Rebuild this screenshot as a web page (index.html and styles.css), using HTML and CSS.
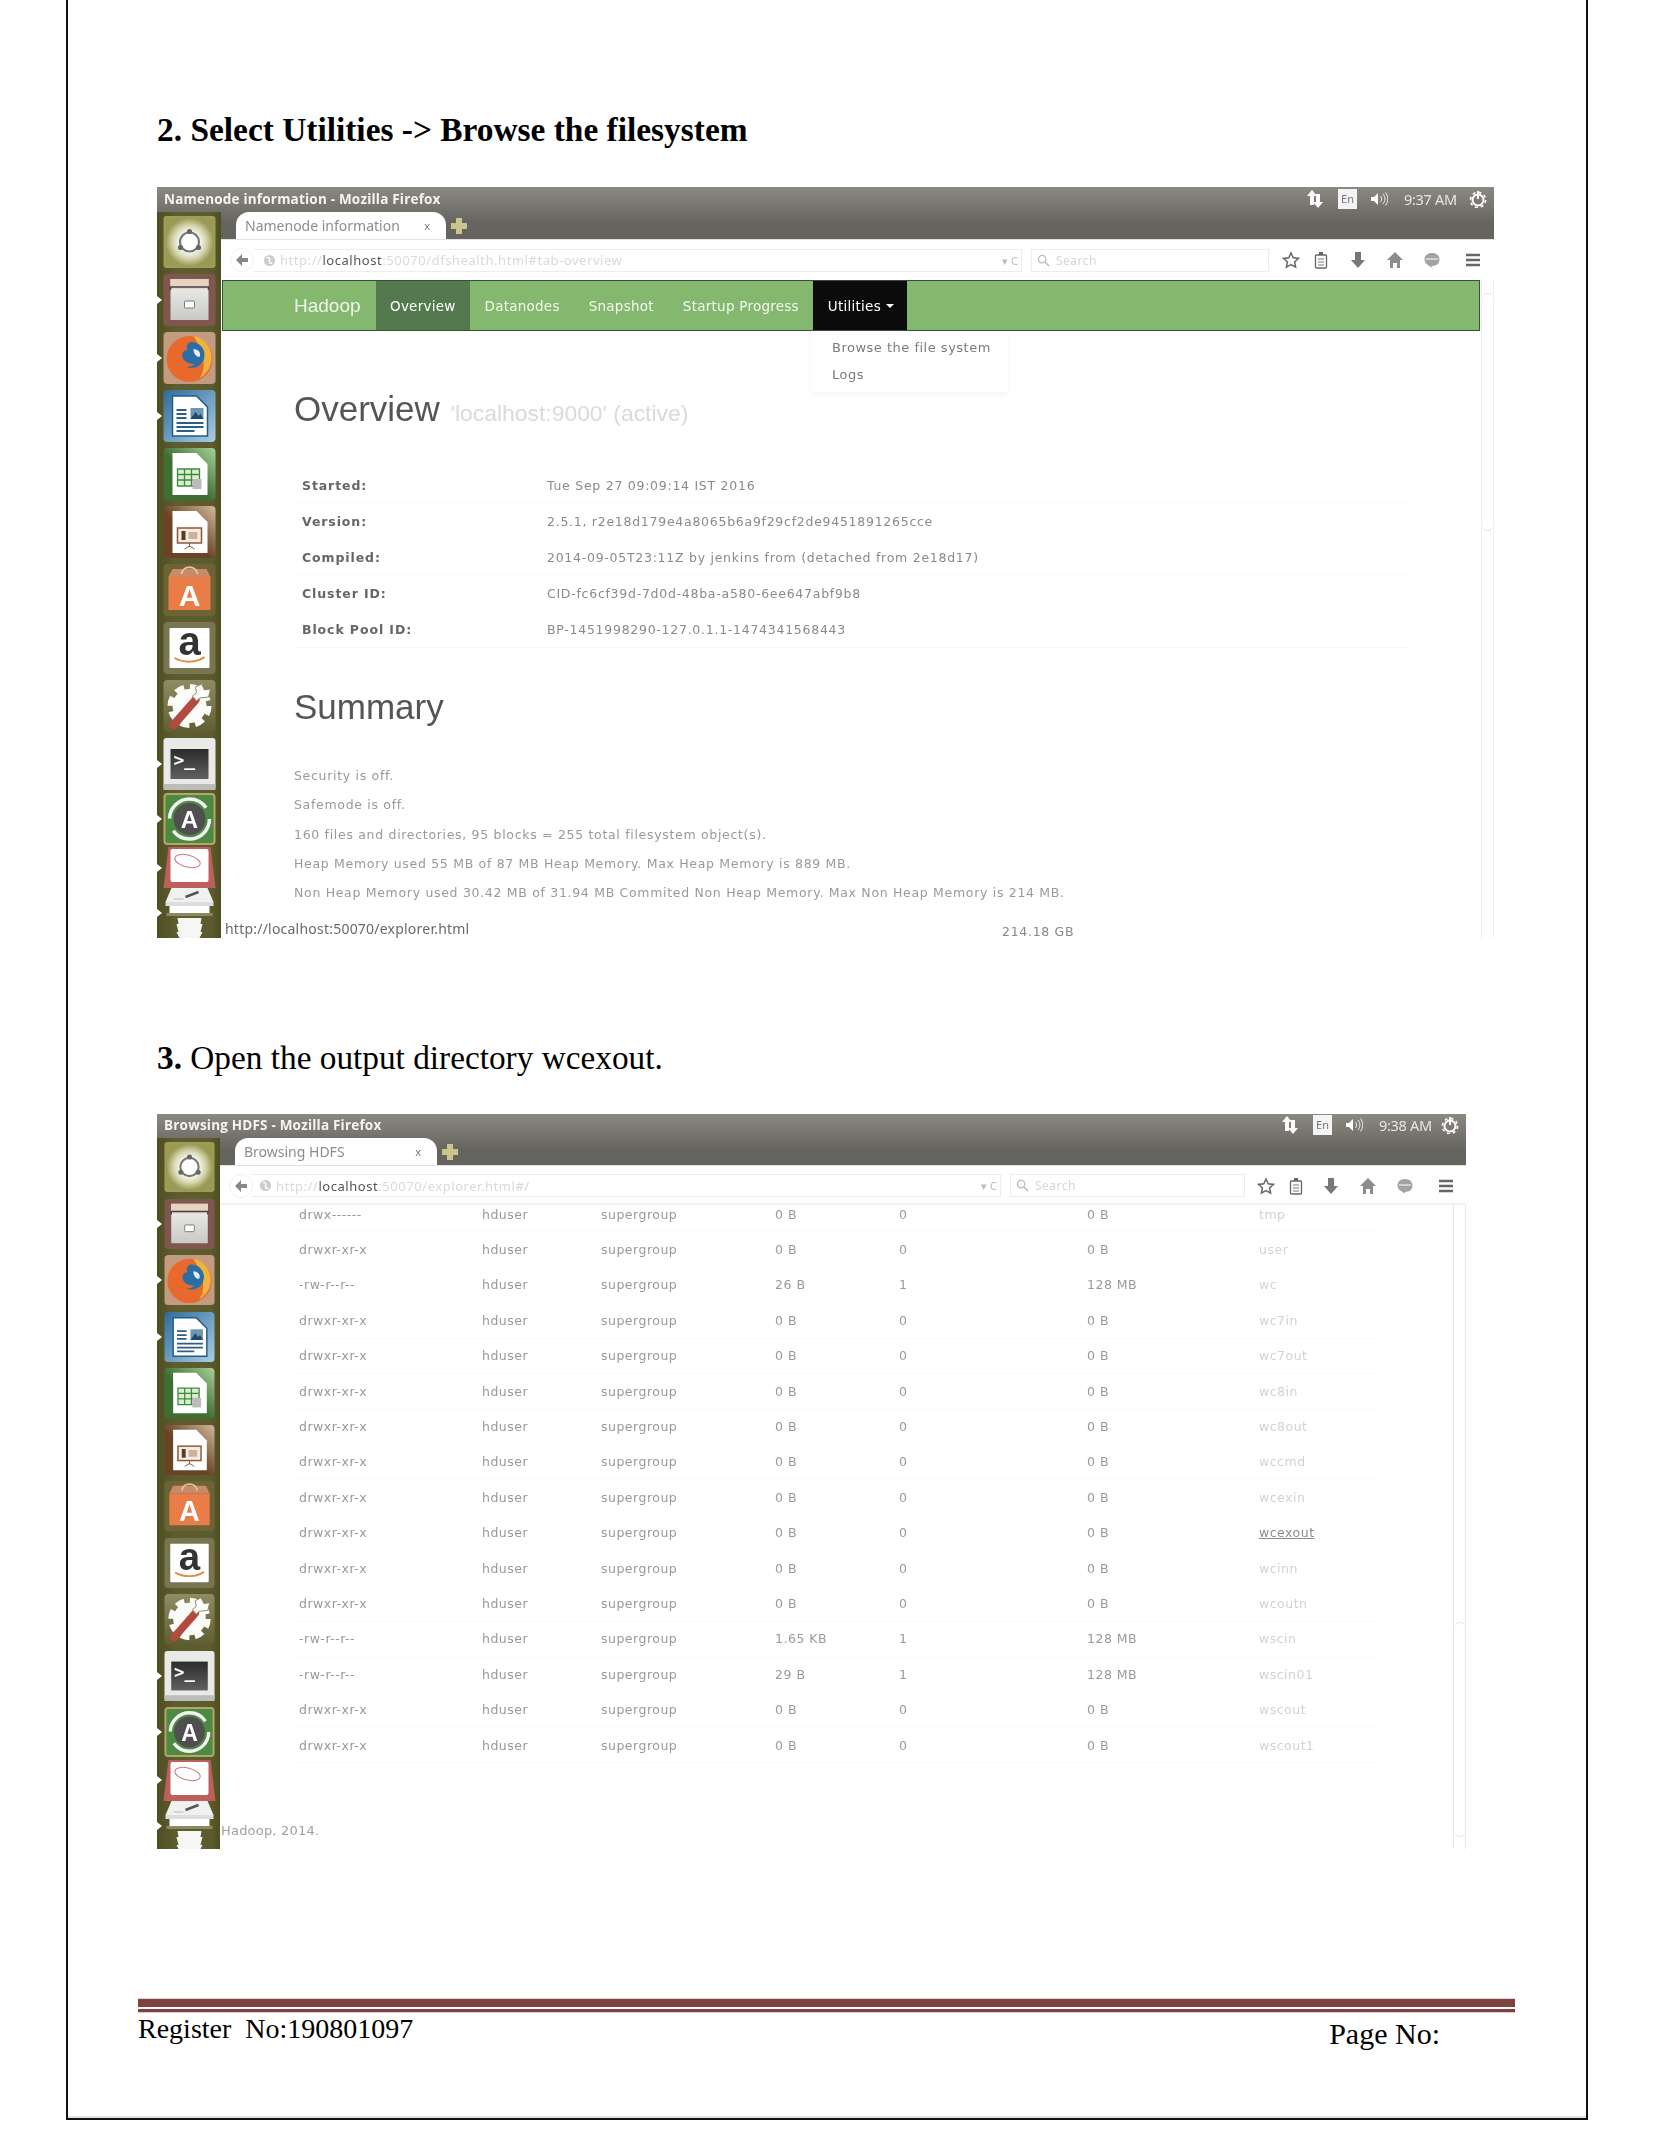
FILE: index.html
```html
<!DOCTYPE html>
<html lang="en">
<head>
<meta charset="utf-8">
<title>Hadoop lab record</title>
<link rel="stylesheet" href="styles.css">
</head>
<body>
<svg class="defs" aria-hidden="true">
  <defs>
    <radialGradient id="gDash"><stop offset="0.35" stop-color="#fff"/><stop offset="0.7" stop-color="#d4d4ac"/><stop offset="1" stop-color="#9a9a55"/></radialGradient>
    <linearGradient id="gDrawer" x1="0" y1="0" x2="0" y2="1"><stop offset="0" stop-color="#f1f1ef"/><stop offset="1" stop-color="#c9c9c6"/></linearGradient>
    <linearGradient id="gWriter" x1="0" y1="0" x2="1" y2="1"><stop offset="0" stop-color="#2f6b99"/><stop offset="1" stop-color="#a9cde4"/></linearGradient>
    <linearGradient id="gCalc" x1="0" y1="1" x2="1" y2="0"><stop offset="0.45" stop-color="#3d6f33"/><stop offset="1" stop-color="#a8d09a"/></linearGradient>
    <linearGradient id="gImp" x1="0" y1="1" x2="1" y2="0"><stop offset="0.45" stop-color="#6a4324"/><stop offset="1" stop-color="#d3b89d"/></linearGradient>
    <linearGradient id="gTerm" x1="0" y1="0" x2="0" y2="1"><stop offset="0" stop-color="#2b2b2b"/><stop offset="1" stop-color="#606060"/></linearGradient>
    <linearGradient id="gTile" x1="0" y1="0" x2="0" y2="1"><stop offset="0" stop-color="#8d8c63"/><stop offset="1" stop-color="#5f5e33"/></linearGradient>
    <symbol id="i-dash" viewBox="0 0 52 52"><rect width="52" height="52" rx="3" fill="#9d9c58"/><rect x="2" y="2" width="48" height="48" fill="url(#gDash)"/><circle cx="26" cy="26" r="9.500" fill="none" stroke="#777" stroke-width="2.200"/><circle cx="26" cy="15.500" r="2.600" fill="#666"/><circle cx="17" cy="31.500" r="2.600" fill="#666"/><circle cx="35" cy="31.500" r="2.600" fill="#666"/></symbol>
    <symbol id="i-files" viewBox="0 0 52 52"><rect width="52" height="52" rx="4" fill="#80574e"/><rect x="7" y="5" width="38" height="41" fill="url(#gDrawer)"/><rect x="7" y="5" width="38" height="10" fill="#e7d3bf"/><path d="M7 16V13H45V16" fill="none" stroke="#444" stroke-width="1.500"/><rect x="21" y="27" width="10" height="7" rx="1" fill="#fff" stroke="#777"/></symbol>
    <symbol id="i-firefox" viewBox="0 0 52 52"><rect width="52" height="52" rx="4" fill="#c49a80"/><circle cx="26" cy="27" r="23" fill="#e8692c"/><path d="M30 4c12 2 19 13 18 24-1 9-6 15-12 18 6-8 7-21-6-42z" fill="#f0b33c"/><circle cx="28" cy="23" r="13" fill="#2b6ea6"/><path d="M14 13c4-4 10-5 13-3-3 1-5 5-3 8-4 0-6 3-5 7 1 4 5 7 12 7-6 6-20 3-22-9-1-4 2-8 5-10z" fill="#e8692c"/><path d="M30 17c5 0 8 4 6 8-3 0-6-3-6-8z" fill="#e6edf2"/></symbol>
    <symbol id="i-writer" viewBox="0 0 52 52"><rect width="52" height="52" rx="4" fill="url(#gWriter)"/><path d="M9 6H33L44 17V46H9z" fill="#fff" stroke="#1f5c8d" stroke-width="1.500"/><path d="M13 20h10M13 24h10M13 28h10M13 33h27M13 37h27M13 41h18" stroke="#2b5f88" stroke-width="1.800"/><rect x="27" y="18" width="13" height="11" fill="#6d95b4"/><path d="M27 29l5-7 3 4 2-2 3 5z" fill="#1e4a6d"/></symbol>
    <symbol id="i-calc" viewBox="0 0 52 52"><rect width="52" height="52" rx="4" fill="url(#gCalc)"/><path d="M9 5H33L44 16V47H9z" fill="#fff"/><path d="M14 21h22v17H14zM14 26.500h22M14 32h22M21 21v17M28 21v17" fill="#dcecd4" stroke="#3e8a38" stroke-width="1.300"/><rect x="29" y="31" width="9" height="10" fill="#bbb"/></symbol>
    <symbol id="i-impress" viewBox="0 0 52 52"><rect width="52" height="52" rx="4" fill="url(#gImp)"/><path d="M9 5H33L44 16V47H9z" fill="#fff"/><rect x="14" y="22" width="24" height="15" fill="#f4ece3" stroke="#8a5a34" stroke-width="1.500"/><rect x="18" y="25" width="4" height="9" fill="#5a3a20"/><rect x="25" y="26" width="9" height="7" fill="#c8b39c"/><path d="M26 37v4M21 43l5-3 5 3" stroke="#8a5a34" fill="none"/></symbol>
    <symbol id="i-soft" viewBox="0 0 52 52"><rect width="52" height="52" rx="4" fill="#6d6436"/><path d="M5 13H47V46H5z" fill="#ea7c47"/><path d="M5 13H47L43 5H9z" fill="#c98a68"/><path d="M18 10c1-9 15-9 16 0" fill="none" stroke="#e8c0a8" stroke-width="2"/><text x="26" y="42" class="sv-a" fill="#fff">A</text></symbol>
    <symbol id="i-amazon" viewBox="0 0 52 52"><rect width="52" height="52" rx="4" fill="#777650"/><rect x="6" y="6" width="40" height="40" rx="1" fill="#fff"/><text x="26" y="33" class="sv-amz" fill="#333">a</text><path d="M11 36c9 5 22 5 30 -1" fill="none" stroke="#e08c3c" stroke-width="2"/></symbol>
    <symbol id="i-tools" viewBox="0 0 52 52"><rect width="52" height="52" rx="4" fill="url(#gTile)"/><circle cx="26" cy="26" r="17" fill="#fbfbf8"/><circle cx="26" cy="26" r="19" fill="none" stroke="#fbfbf8" stroke-width="6" stroke-dasharray="9 5.900"/><path d="M10 45L32 20" stroke="#b34a40" stroke-width="8" stroke-linecap="round"/><path d="M38 4l3 6 6-1-2 8-9 1-3 3-4-5 4-3-1-6z" fill="#fff" stroke="#8d8c63"/></symbol>
    <symbol id="i-term" viewBox="0 0 52 52"><rect width="52" height="52" rx="3" fill="#e9e9e7"/><rect x="0" y="46" width="52" height="6" fill="#bcbcb8"/><rect x="7" y="11" width="38" height="30" fill="url(#gTerm)"/><text x="10" y="28" class="sv-term" fill="#fff">&gt;_</text></symbol>
    <symbol id="i-update" viewBox="0 0 52 52"><rect x="1" y="1" width="50" height="50" rx="3" fill="#4c8a42" stroke="#b6a568" stroke-width="2"/><circle cx="26" cy="26" r="20" fill="none" stroke="#f1f1f1" stroke-width="3.500" stroke-dasharray="50 13"/><circle cx="26" cy="26" r="16" fill="#4f4f4f"/><text x="26" y="35" class="sv-a small" fill="#fff">A</text></symbol>
    <symbol id="i-red" viewBox="0 0 52 41"><path d="M5 0H47L52 41H0z" fill="#bd5f5c"/><rect x="7" y="2" width="38" height="33" rx="2" fill="#fff"/><ellipse cx="24" cy="14" rx="13" ry="6" fill="none" stroke="#c77a78" stroke-width="1" transform="rotate(14 24 14)"/></symbol>
    <symbol id="i-stack" viewBox="0 0 52 50"><path d="M8 0H44L50 14H2z" fill="#f1f1ef"/><path d="M22 9l13-5" stroke="#555" stroke-width="2.500"/><path d="M10 11h10" stroke="#bbb"/><rect x="2" y="14" width="48" height="4" fill="#ddd"/><rect x="6" y="18" width="40" height="7" fill="#fff"/><rect x="3" y="25" width="46" height="3" fill="#8a8a60"/><path d="M14 30H38L37 36H39L37 44H39L36 50H16L13 44H15L13 36H15z" fill="#f6f6f4"/></symbol>

    <symbol id="t-star" viewBox="0 0 18 18"><path d="M9 2l2.200 4.800 5.300.600-3.900 3.600 1 5.200L9 13.700 4.400 16.200l1-5.200L1.500 7.400l5.300-.600z" fill="none" stroke="#666" stroke-width="1.500"/></symbol>
    <symbol id="t-clip" viewBox="0 0 18 18"><rect x="3.500" y="4" width="11" height="13" rx="1" fill="none" stroke="#666" stroke-width="1.300"/><path d="M6 8h6M6 11h6M6 14h6" stroke="#777"/><rect x="7" y="1" width="4" height="3" fill="#666"/></symbol>
    <symbol id="t-down" viewBox="0 0 18 18"><path d="M6 1h6v8h4l-7 8-7-8h4z" fill="#777"/></symbol>
    <symbol id="t-home" viewBox="0 0 18 18"><path d="M9 1l8 8h-3v8h-3v-5H7v5H4V9H1z" fill="#8c8c8c"/></symbol>
    <symbol id="t-chat" viewBox="0 0 18 18"><path d="M9 2c4.500 0 7.500 2.800 7.500 6.500S13.500 15 9 15l-1 1.500-2-2C3 13.500 1.500 11 1.500 8.500 1.500 4.800 4.500 2 9 2z" fill="#a2a2a2"/><path d="M3 8h12" stroke="#fff"/></symbol>
    <symbol id="t-menu" viewBox="0 0 18 18"><path d="M2 4h14M2 9h14M2 14h14" stroke="#666" stroke-width="2.400"/></symbol>
    <symbol id="t-arrows" viewBox="0 0 18 18"><path d="M6 0l5 6H8v9H4V6H1zM12 18l-5-6h3V4h4v8h3z" fill="#fff"/></symbol>
    <symbol id="t-sound" viewBox="0 0 18 18"><path d="M1 7h3l4-4v12l-4-4H1z" fill="#fff"/><path d="M10.500 6c1.500 2 1.500 4 0 6M13 4c2.500 3 2.500 7 0 10M15.500 2.500c3 4 3 9 0 13" fill="none" stroke="#eee"/></symbol>
    <symbol id="t-power" viewBox="0 0 18 18"><circle cx="9" cy="10" r="5.500" fill="none" stroke="#fff" stroke-width="2"/><circle cx="9" cy="10" r="7.600" fill="none" stroke="#fff" stroke-width="1.600" stroke-dasharray="3 3"/><path d="M9 1v8" stroke="#fff" stroke-width="2"/></symbol>
    <symbol id="t-search" viewBox="0 0 14 14"><circle cx="5.500" cy="5.500" r="4" fill="none" stroke="#bbb" stroke-width="1.300"/><path d="M8.500 8.500l4.500 4.500" stroke="#bbb" stroke-width="1.500"/></symbol>
    <symbol id="t-globe" viewBox="0 0 14 14"><circle cx="7" cy="7" r="6" fill="#ccc"/><path d="M4 4c3-1 4 1 3 3s1 3 3 3" fill="none" stroke="#fff" stroke-width="1.500"/></symbol>
    <symbol id="t-back" viewBox="0 0 14 14"><path d="M7 1L1 7l6 6V9h6V5H7z" fill="#888"/></symbol>
  </defs>
</svg>

<main class="sheet">
  <h2 class="step">2. Select Utilities -&gt; Browse the filesystem</h2>

  <section class="shot shot-a">
    <header class="titlebar">
      <span class="wintitle">Namenode information - Mozilla Firefox</span>
      <div class="tray">
        <svg class="tray-ic"><use href="#t-arrows"/></svg>
        <span class="lang">En</span>
        <svg class="tray-ic"><use href="#t-sound"/></svg>
        <span class="clock">9:37 AM</span>
        <svg class="tray-ic"><use href="#t-power"/></svg>
      </div>
    </header>
    <div class="shot-body">
      <nav class="dock">
        <div class="slot"><svg class="dock-ic"><use href="#i-dash"/></svg></div>
        <div class="slot run"><svg class="dock-ic"><use href="#i-files"/></svg></div>
        <div class="slot run active"><svg class="dock-ic"><use href="#i-firefox"/></svg></div>
        <div class="slot run"><svg class="dock-ic"><use href="#i-writer"/></svg></div>
        <div class="slot"><svg class="dock-ic"><use href="#i-calc"/></svg></div>
        <div class="slot"><svg class="dock-ic"><use href="#i-impress"/></svg></div>
        <div class="slot"><svg class="dock-ic"><use href="#i-soft"/></svg></div>
        <div class="slot"><svg class="dock-ic"><use href="#i-amazon"/></svg></div>
        <div class="slot"><svg class="dock-ic"><use href="#i-tools"/></svg></div>
        <div class="slot run"><svg class="dock-ic"><use href="#i-term"/></svg></div>
        <div class="slot run upd"><svg class="dock-ic"><use href="#i-update"/></svg></div>
        <div class="slot run squat"><svg class="dock-ic"><use href="#i-red"/></svg></div>
        <div class="slot run stack"><svg class="dock-ic"><use href="#i-stack"/></svg></div>
      </nav>
      <div class="browser">
        <div class="tabstrip">
          <div class="tab"><span>Namenode information</span><b class="tab-x">x</b></div>
          <span class="newtab"></span>
        </div>
        <div class="toolbar">
          <span class="backbtn"><svg class="back-ic"><use href="#t-back"/></svg></span>
          <div class="urlbar">
            <svg class="url-ic"><use href="#t-globe"/></svg>
            <span class="url"><span>http://</span><em>localhost</em><span>:50070/dfshealth.html#tab-overview</span></span>
            <span class="url-end">▾ C</span>
          </div>
          <div class="searchbar"><svg class="url-ic"><use href="#t-search"/></svg><span>Search</span></div>
          <div class="tools">
            <svg class="tool"><use href="#t-star"/></svg>
            <svg class="tool"><use href="#t-clip"/></svg>
            <svg class="tool"><use href="#t-down"/></svg>
            <svg class="tool"><use href="#t-home"/></svg>
            <svg class="tool"><use href="#t-chat"/></svg>
            <svg class="tool"><use href="#t-menu"/></svg>
          </div>
        </div>
        <div class="view">
          <div class="doc">
            <div class="navbar">
              <span class="brand">Hadoop</span>
              <span class="nav-item current">Overview</span>
              <span class="nav-item">Datanodes</span>
              <span class="nav-item">Snapshot</span>
              <span class="nav-item">Startup Progress</span>
              <span class="nav-item open">Utilities <i class="caret"></i></span>
            </div>
            <div class="dropdown">
              <span>Browse the file system</span>
              <span>Logs</span>
            </div>
            <div class="content">
              <h1 class="heading">Overview <small>'localhost:9000' (active)</small></h1>
              <dl class="facts">
                <div class="fact"><dt>Started:</dt><dd>Tue Sep 27 09:09:14 IST 2016</dd></div>
                <div class="fact"><dt>Version:</dt><dd>2.5.1, r2e18d179e4a8065b6a9f29cf2de9451891265cce</dd></div>
                <div class="fact"><dt>Compiled:</dt><dd>2014-09-05T23:11Z by jenkins from (detached from 2e18d17)</dd></div>
                <div class="fact"><dt>Cluster ID:</dt><dd>CID-fc6cf39d-7d0d-48ba-a580-6ee647abf9b8</dd></div>
                <div class="fact"><dt>Block Pool ID:</dt><dd>BP-1451998290-127.0.1.1-1474341568443</dd></div>
              </dl>
              <h1 class="heading second">Summary</h1>
              <div class="summary">
                <p>Security is off.</p>
                <p>Safemode is off.</p>
                <p>160 files and directories, 95 blocks = 255 total filesystem object(s).</p>
                <p>Heap Memory used 55 MB of 87 MB Heap Memory. Max Heap Memory is 889 MB.</p>
                <p>Non Heap Memory used 30.42 MB of 31.94 MB Commited Non Heap Memory. Max Non Heap Memory is 214 MB.</p>
              </div>
            </div>
            <span class="status">http://localhost:50070/explorer.html</span>
            <span class="peek">214.18 GB</span>
          </div>
          <div class="scroll"><span class="thumb"></span></div>
        </div>
      </div>
    </div>
  </section>

  <h2 class="step plain"><b>3.</b> Open the output directory wcexout.</h2>

  <section class="shot shot-b">
    <header class="titlebar">
      <span class="wintitle">Browsing HDFS - Mozilla Firefox</span>
      <div class="tray">
        <svg class="tray-ic"><use href="#t-arrows"/></svg>
        <span class="lang">En</span>
        <svg class="tray-ic"><use href="#t-sound"/></svg>
        <span class="clock">9:38 AM</span>
        <svg class="tray-ic"><use href="#t-power"/></svg>
      </div>
    </header>
    <div class="shot-body">
      <nav class="dock">
        <div class="slot"><svg class="dock-ic"><use href="#i-dash"/></svg></div>
        <div class="slot run"><svg class="dock-ic"><use href="#i-files"/></svg></div>
        <div class="slot run active"><svg class="dock-ic"><use href="#i-firefox"/></svg></div>
        <div class="slot run"><svg class="dock-ic"><use href="#i-writer"/></svg></div>
        <div class="slot"><svg class="dock-ic"><use href="#i-calc"/></svg></div>
        <div class="slot"><svg class="dock-ic"><use href="#i-impress"/></svg></div>
        <div class="slot"><svg class="dock-ic"><use href="#i-soft"/></svg></div>
        <div class="slot"><svg class="dock-ic"><use href="#i-amazon"/></svg></div>
        <div class="slot"><svg class="dock-ic"><use href="#i-tools"/></svg></div>
        <div class="slot run"><svg class="dock-ic"><use href="#i-term"/></svg></div>
        <div class="slot run upd"><svg class="dock-ic"><use href="#i-update"/></svg></div>
        <div class="slot run squat"><svg class="dock-ic"><use href="#i-red"/></svg></div>
        <div class="slot run stack"><svg class="dock-ic"><use href="#i-stack"/></svg></div>
      </nav>
      <div class="browser">
        <div class="tabstrip">
          <div class="tab"><span>Browsing HDFS</span><b class="tab-x">x</b></div>
          <span class="newtab"></span>
        </div>
        <div class="toolbar">
          <span class="backbtn"><svg class="back-ic"><use href="#t-back"/></svg></span>
          <div class="urlbar">
            <svg class="url-ic"><use href="#t-globe"/></svg>
            <span class="url"><span>http://</span><em>localhost</em><span>:50070/explorer.html#/</span></span>
            <span class="url-end">▾ C</span>
          </div>
          <div class="searchbar"><svg class="url-ic"><use href="#t-search"/></svg><span>Search</span></div>
          <div class="tools">
            <svg class="tool"><use href="#t-star"/></svg>
            <svg class="tool"><use href="#t-clip"/></svg>
            <svg class="tool"><use href="#t-down"/></svg>
            <svg class="tool"><use href="#t-home"/></svg>
            <svg class="tool"><use href="#t-chat"/></svg>
            <svg class="tool"><use href="#t-menu"/></svg>
          </div>
        </div>
        <div class="view">
          <div class="doc">
            <div class="listing">
              <div class="row"><span>drwx------</span><span>hduser</span><span>supergroup</span><span>0 B</span><span>0</span><span>0 B</span><a>tmp</a></div>
              <div class="row"><span>drwxr-xr-x</span><span>hduser</span><span>supergroup</span><span>0 B</span><span>0</span><span>0 B</span><a>user</a></div>
              <div class="row"><span>-rw-r--r--</span><span>hduser</span><span>supergroup</span><span>26 B</span><span>1</span><span>128 MB</span><a>wc</a></div>
              <div class="row"><span>drwxr-xr-x</span><span>hduser</span><span>supergroup</span><span>0 B</span><span>0</span><span>0 B</span><a>wc7in</a></div>
              <div class="row"><span>drwxr-xr-x</span><span>hduser</span><span>supergroup</span><span>0 B</span><span>0</span><span>0 B</span><a>wc7out</a></div>
              <div class="row"><span>drwxr-xr-x</span><span>hduser</span><span>supergroup</span><span>0 B</span><span>0</span><span>0 B</span><a>wc8in</a></div>
              <div class="row"><span>drwxr-xr-x</span><span>hduser</span><span>supergroup</span><span>0 B</span><span>0</span><span>0 B</span><a>wc8out</a></div>
              <div class="row"><span>drwxr-xr-x</span><span>hduser</span><span>supergroup</span><span>0 B</span><span>0</span><span>0 B</span><a>wccmd</a></div>
              <div class="row"><span>drwxr-xr-x</span><span>hduser</span><span>supergroup</span><span>0 B</span><span>0</span><span>0 B</span><a>wcexin</a></div>
              <div class="row"><span>drwxr-xr-x</span><span>hduser</span><span>supergroup</span><span>0 B</span><span>0</span><span>0 B</span><a class="hover">wcexout</a></div>
              <div class="row"><span>drwxr-xr-x</span><span>hduser</span><span>supergroup</span><span>0 B</span><span>0</span><span>0 B</span><a>wcinn</a></div>
              <div class="row"><span>drwxr-xr-x</span><span>hduser</span><span>supergroup</span><span>0 B</span><span>0</span><span>0 B</span><a>wcoutn</a></div>
              <div class="row"><span>-rw-r--r--</span><span>hduser</span><span>supergroup</span><span>1.65 KB</span><span>1</span><span>128 MB</span><a>wscin</a></div>
              <div class="row"><span>-rw-r--r--</span><span>hduser</span><span>supergroup</span><span>29 B</span><span>1</span><span>128 MB</span><a>wscin01</a></div>
              <div class="row"><span>drwxr-xr-x</span><span>hduser</span><span>supergroup</span><span>0 B</span><span>0</span><span>0 B</span><a>wscout</a></div>
              <div class="row"><span>drwxr-xr-x</span><span>hduser</span><span>supergroup</span><span>0 B</span><span>0</span><span>0 B</span><a>wscout1</a></div>
            </div>
            <p class="copyright">Hadoop, 2014.</p>
          </div>
          <div class="scroll"><span class="thumb"></span></div>
        </div>
      </div>
    </div>
  </section>

  <footer class="foot">
    <div class="rule"></div>
    <div class="foot-row">
      <span class="reg">Register  No:190801097</span>
      <span class="pageno">Page No:</span>
    </div>
  </footer>
</main>
</body>
</html>
```
FILE: styles.css
```css
* { box-sizing: border-box; }
html, body { margin: 0; background: #fff; }
body { width: 1654px; height: 2153px; overflow: hidden; font-family: "Liberation Serif", serif; color: #000; }
.defs { position: absolute; width: 0; height: 0; }

.sheet {
  margin-left: 66px; width: 1522px; height: 2120px;
  border: solid #111; border-width: 0 2px 2px;
  padding: 110px 0 0 70px;
  box-shadow: inset 0 -2px 0 #e3e3e3;
}

.step {
  margin: 0 0 37px 19px; height: 40px; line-height: 40px;
  font-size: 33.400px; font-weight: 700; font-family: "Liberation Serif", serif; white-space: nowrap;
}
.step.plain { margin-top: 100px; margin-bottom: 36px; font-weight: 400; font-size: 33.300px; }

/* screenshots */
.shot {
  --icon: 52px; --gap: 6px; --dock: 64px; --search: 238px; --upd: -3px;
  margin-left: 19px; width: 1337px; height: 751px; overflow: hidden;
  display: flex; flex-direction: column;
  background: linear-gradient(#8c8982, #66645e 36px, #66645e);
  filter: blur(0.45px);
  font-family: "DejaVu Sans", sans-serif;
}
.shot-b { --icon: 50px; --gap: 6.500px; --dock: 63px; --search: 235px; --upd: 0px; width: 1309px; height: 735px; }

.titlebar { height: 25px; flex: none; display: flex; align-items: center; justify-content: space-between; padding: 0 7px 2px; }
.shot-b .titlebar { height: 24px; }
.wintitle { font: 700 13.500px "Open Sans", sans-serif; color: #f4f4f2; letter-spacing: .2px; }
.tray { display: flex; align-items: center; }
.tray-ic { width: 18px; height: 18px; display: block; }
.lang { width: 19px; height: 20px; margin: 0 13px 0 14px; background: #f4f4f4; color: #777; font: 11px/20px "Noto Sans", sans-serif; text-align: center; }
.clock { width: 52px; margin: 0 13px 0 16px; font: 14.500px "Noto Sans", sans-serif; color: #e6e6e2; white-space: nowrap; letter-spacing: -.3px; }
.shot-b .clock { margin-right: 10px; }

.shot-body { flex: 1; min-height: 0; display: flex; }
.dock {
  width: var(--dock); flex: none; overflow: hidden;
  display: flex; flex-direction: column; gap: var(--gap);
  padding: 4px 0 0 6px;
  background: linear-gradient(90deg, #4f4e22, #5e5d30 30%, #5c5b2d 85%, #4f4e22);
}
.slot { position: relative; width: 53px; height: var(--icon); flex: none; }
.slot.upd { margin-top: var(--upd); }
.slot.squat { height: 41px; margin-top: -4px; margin-bottom: -6px; }
.slot.stack { height: 50px; }
.slot.run::before { content: ""; position: absolute; left: -6px; top: 50%; margin-top: -4px; border: 4px solid transparent; border-left: 5px solid #fff; }
.slot.active::after { content: ""; position: absolute; right: -10px; top: 50%; margin-top: -4px; border: 4px solid transparent; border-right: 5px solid #fff; }
.dock-ic { display: block; width: 100%; height: 100%; }
.sv-a { font: 700 30px "Liberation Sans", sans-serif; text-anchor: middle; }
.sv-a.small { font-size: 24px; }
.sv-amz { font: 700 40px "Liberation Sans", sans-serif; text-anchor: middle; }
.sv-term { font: 700 18px "DejaVu Sans Mono", monospace; }

.browser { flex: 1; min-width: 0; display: flex; flex-direction: column; }
.tabstrip { height: 27px; flex: none; display: flex; align-items: center; padding-left: 15px; }
.tab {
  width: 210px; height: 100%; padding: 0 16px 0 9px; align-self: flex-end;
  display: flex; align-items: center; justify-content: space-between;
  background: #fff; border-radius: 13px 13px 0 0;
  font: 14px "Noto Sans", sans-serif; color: #8d8d8d;
}
.shot-b .tab { width: 202px; }
.tab-x { font-weight: 400; color: #777; font-size: 11px; }
.newtab {
  width: 16px; height: 16px; margin-left: 5px;
  background: linear-gradient(#c9c58c, #c9c58c) center / 6px 100% no-repeat, linear-gradient(#c9c58c, #c9c58c) center / 100% 6px no-repeat;
}

.toolbar {
  height: 41px; flex: none; display: flex; align-items: center; padding-left: 9px;
  background: #fff; border-top: 1px solid #e2e2e2;
}
.shot-b .toolbar { height: 38px; padding-top: 2px; }
.backbtn { width: 24px; height: 24px; flex: none; border: 1px solid #f0f0f0; border-radius: 50%; display: flex; align-items: center; justify-content: center; margin-right: -1px; background: #fff; position: relative; }
.back-ic { width: 14px; height: 14px; }
.urlbar {
  flex: 1; min-width: 0; height: 23px; display: flex; align-items: center; gap: 4px; padding: 0 3px 0 10px;
  border: 1px solid #ededed; border-left: 0; font: 13px "Noto Sans", sans-serif; color: #d9d9d9;
}
.shot-b .urlbar { padding-left: 7px; }
.url-ic { width: 13px; height: 13px; flex: none; }
.url { flex: 1; white-space: nowrap; letter-spacing: .55px; }
.url em { font-style: normal; color: #555; }
.url-end { color: #bbb; font-size: 11px; }
.searchbar {
  width: var(--search); flex: none; height: 23px; margin-left: 9px; padding-left: 5px; display: flex; align-items: center; gap: 6px;
  border: 1px solid #ededed; font: 12px "Noto Sans", sans-serif; color: #d6d6d6; letter-spacing: .5px;
}
.tools { display: flex; align-items: center; padding-left: 13px; padding-right: 12px; flex: none; }
.shot-b .tools { padding-left: 12px; padding-right: 11px; }
.tool { width: 18px; height: 18px; display: block; }
.tool + .tool { margin-left: 19px; }
.tool:nth-child(2) { margin-left: 12px; }
.tool:nth-child(6) { margin-left: 23px; }
.shot-b .tool:nth-child(3) { margin-left: 17px; }

.view { flex: 1; min-height: 0; display: flex; background: #fff; }
.shot-b .view { border-top: 2px solid #f1f1f1; }
.doc { flex: 1; min-width: 0; position: relative; overflow: hidden; padding-left: 1px; }
.scroll { width: 13px; flex: none; border: 1px solid #efefef; border-width: 0 1px; position: relative; }
.thumb { position: absolute; left: 0; right: 0; top: 13px; height: 238px; border: 1px solid #e2e2e2; border-width: 1px 0; border-radius: 7px; }
.shot-b .scroll { border-left-color: #e6e6e6; border-right-color: #e6e6e6; }
.shot-b .thumb { top: 417px; height: 215px; }

.navbar {
  height: 51px; width: 1258px; display: flex; align-items: stretch;
  background: #85b86f; border: 1px solid #38503a; padding-left: 71px;
  color: #f3f7f0; font-size: 13.500px; letter-spacing: .25px;
}
.brand { width: 82px; font: 19px/49px "Liberation Sans", sans-serif; color: #eef4ea; letter-spacing: 0; }
.nav-item { display: flex; align-items: center; padding: 0 14.500px; white-space: nowrap; }
.nav-item.current { width: 94px; padding: 0 14px; background: #55794e; color: #fff; }
.nav-item.open { width: 94px; background: #0b0b0b; color: #fff; gap: 5px; margin-left: 0; }
.caret { border: 4px solid transparent; border-top-color: #fff; border-bottom: 0; }
.dropdown {
  position: absolute; left: 590px; top: 51px; width: 197px; height: 61px;
  padding: 8px 21px; display: flex; flex-direction: column; gap: 9px;
  background: #fff; box-shadow: 0 2px 6px rgba(0, 0, 0, .05); border-radius: 0 0 4px 4px;
  font-size: 13px; letter-spacing: .5px; color: #7c7c7c; white-space: nowrap;
}
.dropdown span { line-height: 18px; }

.content { padding-left: 72px; }
.heading { margin: 58px 0 34px; font: 400 35px/40px "Liberation Sans", sans-serif; color: #555; }
.heading small { font-size: 22.900px; color: #dadada; margin-left: 1px; }
.heading.second { margin: 39px 0 34px; }
.facts { margin: 0; width: 1118px; border-bottom: 1px solid #f8f8f8; font-size: 12.500px; letter-spacing: .73px; }
.fact { height: 36px; display: flex; align-items: center; border-top: 1px solid #fbfbfb; }
.fact dt { width: 253px; padding-left: 8px; font-weight: 700; color: #666; letter-spacing: .9px; }
.fact dd { margin: 0; color: #8a8a8a; white-space: nowrap; }
.summary { font-size: 12.500px; letter-spacing: .69px; color: #9a9a9a; }
.summary p { margin: 0; height: 29.300px; line-height: 29.300px; white-space: nowrap; }

.status { position: absolute; left: 0; bottom: 0; padding: 0 4px; height: 22px; background: #fff; font: 14px/26px "Noto Sans", sans-serif; color: #6a6a6a; letter-spacing: .22px; }
.peek { position: absolute; left: 781px; bottom: -1px; font-size: 12.500px; line-height: 14px; color: #888; letter-spacing: .7px; }

.listing { margin-top: -8px; }
.row {
  height: 35.400px; margin-left: 74px; width: 1085px;
  display: grid; grid-template-columns: 187px 119px 174px 124px 188px 172px 1fr; align-items: center;
  border-bottom: 1px solid #fbfbfb;
  font-size: 12.500px; letter-spacing: .5px; color: #999;
}
.row span:first-child { padding-left: 4px; }
.row a { color: #cbd4d9; }
.row a.hover { color: #868d91; text-decoration: underline; }
.copyright { margin: 60px 0 0; font-size: 13px; line-height: 16px; color: #a0a0a0; letter-spacing: .2px; }

/* footer */
.foot { margin-top: 150px; width: 1377px; }
.rule { height: 13px; border-top: 8px solid #7b4240; border-bottom: 3px solid #7b4240; box-shadow: 0 1px 0 #e5c8c6, 0 -1px 0 #e5d6d5; }
.foot-row { display: flex; justify-content: space-between; align-items: flex-start; padding-right: 75px; }
.reg { font-size: 28px; line-height: 34px; white-space: pre; }
.pageno { font-size: 30px; line-height: 34px; margin-top: 5px; }
```
